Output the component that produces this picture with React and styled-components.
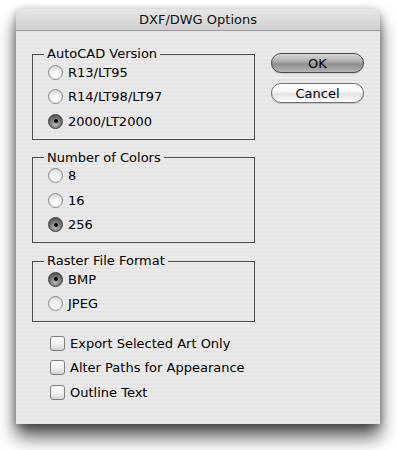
import React from "react";
import styled, { createGlobalStyle } from "styled-components";

const GlobalStyle = createGlobalStyle`
	body {
		margin: 0;
		background: #ffffff;
		font-family: "DejaVu Sans", "Liberation Sans", sans-serif;
	}
`;

const Page = styled.div`
	width: 397px;
	height: 450px;
	padding: 9px 0 0 16px;
	box-sizing: border-box;
`;

const Window = styled.div`
	width: 364px;
	height: 415px;
	border-radius: 5px 5px 0 0;
	background: repeating-linear-gradient(
		to bottom,
		#ebebeb 0px,
		#ebebeb 2px,
		#e4e4e4 2px,
		#e4e4e4 4px
	);
	box-shadow: 0 13px 18px rgba(0, 0, 0, 0.65), 0 2px 8px rgba(0, 0, 0, 0.35);
	display: flex;
	flex-direction: column;
`;

const TitleBar = styled.div`
	height: 22px;
	border-radius: 5px 5px 0 0;
	background: linear-gradient(to bottom, #e6e6e6, #cfcfcf);
	border-bottom: 1px solid #9a9a9a;
	box-sizing: border-box;
	display: flex;
	align-items: center;
	justify-content: center;
	font-size: 13px;
	color: #111;
`;

const Body = styled.div`
	display: flex;
	gap: 16px;
	padding: 0 16px;
`;

const LeftColumn = styled.div`
	width: 223px;
	padding-top: 17px;
	display: flex;
	flex-direction: column;
	gap: 12px;
`;

const Group = styled.fieldset`
	margin: 0;
	padding: 0 0 ${(p) => p.$bottom}px 15px;
	border: 1px solid #4e4e4e;
	min-width: 0;
`;

const Legend = styled.legend`
	margin-left: -4px;
	padding: 0 3px;
	font-size: 13px;
	line-height: 12px;
	color: #000;
`;

const Row = styled.div`
	height: 24.5px;
	display: flex;
	align-items: center;
	gap: 5px;
	font-size: 13px;
	color: #000;
`;

const Radio = styled.span`
	width: 13px;
	height: 13px;
	border-radius: 50%;
	border: 1px solid ${(p) => (p.$on ? "#3a3a3a" : "#8a8a8a")};
	background: ${(p) =>
		p.$on
			? "radial-gradient(circle at 50% 70%, #b8b8b8 0%, #6a6a6a 60%, #444 100%)"
			: "radial-gradient(circle at 50% 75%, #ffffff 0%, #f1f1f1 45%, #c9c9c9 100%)"};
	display: flex;
	align-items: center;
	justify-content: center;
	flex: none;
	&::after {
		content: "";
		display: ${(p) => (p.$on ? "block" : "none")};
		width: 4px;
		height: 4px;
		border-radius: 50%;
		background: #000;
	}
`;

const Checks = styled.div`
	padding: 0 0 0 18px;
	margin-top: -3px;
`;

const Box = styled.span`
	width: 13px;
	height: 13px;
	border-radius: 3px;
	border: 1px solid #7e7e7e;
	background: linear-gradient(to bottom, #ffffff, #f2f2f2 50%, #d4d4d4);
	flex: none;
`;

const RightColumn = styled.div`
	width: 93px;
	padding-top: 22px;
	display: flex;
	flex-direction: column;
	gap: 10px;
`;

const Button = styled.div`
	height: 20px;
	border-radius: 10px;
	box-sizing: border-box;
	border: 1px solid ${(p) => (p.$primary ? "#4a4a4a" : "#6e6e6e")};
	background: ${(p) =>
		p.$primary
			? "linear-gradient(to bottom, #d8d8d8 0%, #a9a9a9 45%, #8c8c8c 55%, #b4b4b4 100%)"
			: "linear-gradient(to bottom, #ffffff 0%, #f6f6f6 45%, #e3e3e3 55%, #ffffff 100%)"};
	box-shadow: 0 1px 1px rgba(0, 0, 0, 0.15);
	display: flex;
	align-items: center;
	justify-content: center;
	font-size: 13px;
	color: #000;
`;

const groups = [
	{
		title: "AutoCAD Version",
		bottom: 5,
		options: ["R13/LT95", "R14/LT98/LT97", "2000/LT2000"],
		selected: 2,
	},
	{
		title: "Number of Colors",
		bottom: 5,
		options: ["8", "16", "256"],
		selected: 2,
	},
	{
		title: "Raster File Format",
		bottom: 5,
		options: ["BMP", "JPEG"],
		selected: 0,
	},
];

const checks = ["Export Selected Art Only", "Alter Paths for Appearance", "Outline Text"];

export default function App() {
	return (
		<Page>
			<GlobalStyle />
			<Window>
				<TitleBar>DXF/DWG Options</TitleBar>
				<Body>
					<LeftColumn>
						{groups.map((g) => (
							<Group key={g.title} $bottom={g.bottom}>
								<Legend>{g.title}</Legend>
								{g.options.map((opt, i) => (
									<Row key={opt}>
										<Radio $on={i === g.selected} />
										{opt}
									</Row>
								))}
							</Group>
						))}
						<Checks>
							{checks.map((c) => (
								<Row key={c}>
									<Box />
									{c}
								</Row>
							))}
						</Checks>
					</LeftColumn>
					<RightColumn>
						<Button $primary>OK</Button>
						<Button>Cancel</Button>
					</RightColumn>
				</Body>
			</Window>
		</Page>
	);
}
